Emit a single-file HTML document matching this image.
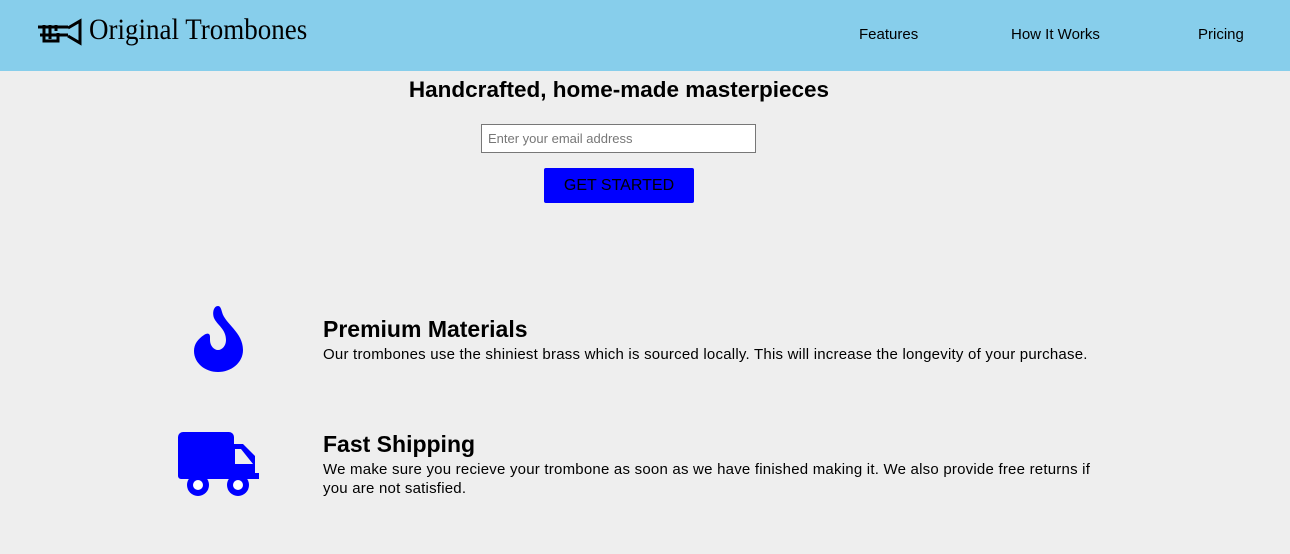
<!DOCTYPE html>
<html><head><style>
body{margin:0;background:#eee;font-family:"Liberation Sans",sans-serif;width:1290px;height:554px;overflow:hidden;position:relative}
header{position:absolute;left:0;top:0;width:1290px;height:71px;background:#87ceeb}
.logo{position:absolute;left:89px;top:13px;font-family:"Liberation Serif",serif;font-size:30px;transform:scaleX(0.9);transform-origin:left top;white-space:nowrap}
.nav{position:absolute;top:26px;font-size:15px}
h1{position:absolute;top:77px;left:0;width:1238px;text-align:center;font-size:22.5px;margin:0}
input{position:absolute;left:481px;top:124px;width:275px;height:29px;box-sizing:border-box;border:1px solid #777;padding:0 6px;font-size:13px;font-family:"Liberation Sans",sans-serif}
input::placeholder{color:#777}
.btn{position:absolute;left:544px;top:168px;width:150px;height:35px;background:#00f;border-radius:2px;text-align:center;line-height:35px;font-size:16px}
.ft{position:absolute;left:323px;font-size:23px;font-weight:bold}
.fd{position:absolute;left:323px;font-size:15px;width:775px;line-height:19px;letter-spacing:0.22px}
</style></head><body>
<header>
<svg style="position:absolute;left:36px;top:18px" width="46" height="28" viewBox="0 0 46 28"><g fill="none" stroke="#000" stroke-width="3"><path d="M2 9h30M4 17h28M32 10l12-7v22l-12-7"/><path d="M8 7v16h14v-8M14 7v14M20 7v6"/></g></svg>
<div class="logo">Original Trombones</div>
<div class="nav" style="left:859px">Features</div>
<div class="nav" style="left:1011px">How It Works</div>
<div class="nav" style="left:1198px">Pricing</div>
</header>
<h1>Handcrafted, home-made masterpieces</h1>
<input placeholder="Enter your email address">
<div class="btn">GET STARTED</div>
<svg style="position:absolute;left:193px;top:306px" width="51" height="66" viewBox="0 0 51 66"><path fill="#00f" d="M25 0c-4 0-6 6-4 12 3 7 12 11 12 22 0 6-4 10-8 10s-8-4-8-10v-3c0-4-3-4-6-2C5 33 1 38 1 45c0 12 11 21 24 21s25-9 25-22C50 26 32 18 29 6 28 2 27 0 25 0z"/></svg>
<svg style="position:absolute;left:178px;top:432px" width="81" height="65" viewBox="0 0 81 65"><path fill="#00f" fill-rule="evenodd" d="M5 0h46a5 5 0 0 1 5 5v7h9l12 12v17h4v6H3a3 3 0 0 1-3-3V5a5 5 0 0 1 5-5zM57 17v15h18L63 17z"/><circle cx="20" cy="53" r="11" fill="#00f"/><circle cx="20" cy="53" r="5" fill="#fff"/><circle cx="60" cy="53" r="11" fill="#00f"/><circle cx="60" cy="53" r="5" fill="#fff"/></svg>
<div class="ft" style="top:316px">Premium Materials</div>
<div class="fd" style="top:345px">Our trombones use the shiniest brass which is sourced locally. This will increase the longevity of your purchase.</div>
<div class="ft" style="top:431px">Fast Shipping</div>
<div class="fd" style="top:460px">We make sure you recieve your trombone as soon as we have finished making it. We also provide free returns if you are not satisfied.</div>
</body></html>
